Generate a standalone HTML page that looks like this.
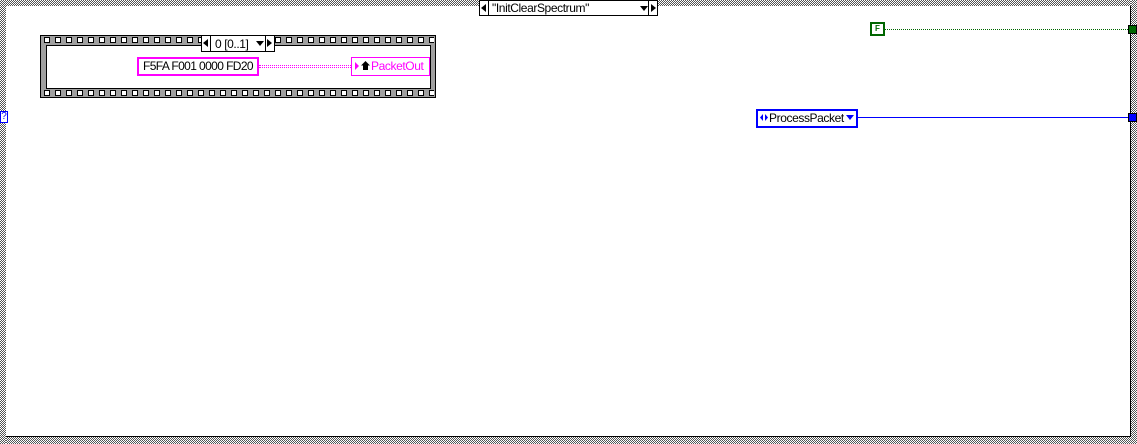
<!DOCTYPE html><html><head><style>
body{margin:0;width:1137px;height:444px;position:relative;overflow:hidden;background:#fff;font-family:"Liberation Sans",sans-serif}
.ck{position:absolute;background-color:#fff;background-image:repeating-conic-gradient(#555 0 25%,#fff 0 50%);background-size:2px 2px}
.a{position:absolute;box-sizing:border-box;white-space:nowrap}
.t{font-size:12px;letter-spacing:-0.4px}
</style></head><body>
<div class="ck" style="left:0;top:0;width:1137px;height:6px"></div>
<div class="ck" style="left:0;top:437px;width:1137px;height:7px"></div>
<div class="ck" style="left:0;top:0;width:6px;height:444px"></div>
<div class="ck" style="left:1131px;top:0;width:6px;height:444px"></div>
<div class="a" style="left:1130px;top:6px;width:1px;height:431px;background:#000"></div>
<div class="a" style="left:6px;top:436px;width:1125px;height:1px;background:#000"></div>
<!-- case selector -->
<div class="a" style="left:479px;top:0;width:179px;height:16px;background:#fff;border:1px solid #000"></div>
<div class="a" style="left:481px;top:4px;width:0;height:0;border:4px solid transparent;border-right:5px solid #000;border-left:none"></div>
<div class="a" style="left:488px;top:0;width:1px;height:16px;background:#000"></div>
<div class="a" style="left:648px;top:0;width:1px;height:16px;background:#000"></div>
<div class="a" style="left:651px;top:4px;width:0;height:0;border:4px solid transparent;border-left:5px solid #000;border-right:none"></div>
<div class="a" style="left:640px;top:6px;border:4px solid transparent;border-top:5px solid #000;border-bottom:none"></div>
<div class="a t" style="left:492px;top:1px;line-height:14px">"InitClearSpectrum"</div>
<!-- sequence frame -->
<svg class="a" style="left:40px;top:35px" width="396" height="63">
<defs><pattern id="p" x="4" y="0" width="11" height="63" patternUnits="userSpaceOnUse"><rect x="0.5" y="2.5" width="5" height="5" fill="#fff" stroke="#000"/><rect x="0.5" y="55.5" width="5" height="5" fill="#fff" stroke="#000"/></pattern></defs>
<rect x="0.5" y="0.5" width="395" height="62" fill="#a0a0a0" stroke="#000"/>
<rect x="2" y="0" width="392" height="63" fill="url(#p)"/>
<rect x="6.5" y="10.5" width="384" height="43" fill="#fff" stroke="#000"/>
</svg>
<div class="a" style="left:201px;top:35px;width:74px;height:17px;background:#fff;border:1px solid #000"></div>
<div class="a" style="left:203px;top:39px;border:4px solid transparent;border-right:5px solid #000;border-left:none"></div>
<div class="a" style="left:210px;top:35px;width:1px;height:17px;background:#000"></div>
<div class="a" style="left:265px;top:35px;width:1px;height:17px;background:#000"></div>
<div class="a" style="left:267px;top:39px;border:4px solid transparent;border-left:5px solid #000;border-right:none"></div>
<div class="a" style="left:256px;top:41px;border:4px solid transparent;border-top:5px solid #000;border-bottom:none"></div>
<div class="a t" style="left:215px;top:37px;line-height:14px">0 [0..1]</div>
<div class="a t" style="left:137px;top:57px;width:122px;height:19px;border:2px solid #f0f;line-height:15px;padding-left:4px;letter-spacing:-0.6px;background:#fff">F5FA F001 0000 FD20</div>
<div class="a" style="left:259px;top:65px;width:92px;height:3px;border-top:1px dotted #f0f;border-bottom:1px dotted #f0f"></div>
<div class="a" style="left:351px;top:57px;width:79px;height:19px;border:1px solid #f0f;background:#fff"></div>
<div class="a" style="left:355px;top:62px;border:4px solid transparent;border-left:4px solid #f0f;border-right:none"></div>
<svg class="a" style="left:361px;top:61px" width="9" height="9"><path d="M4.5 0L9 4.5H7V9H2V4.5H0Z" fill="#000"/></svg>
<div class="a t" style="left:371px;top:58px;line-height:16px;color:#f0f">PacketOut</div>
<!-- ? -->
<div class="a" style="left:0;top:111px;width:8px;height:12px;border:1px solid #00f;background:#fff;font-size:10px;line-height:10px;color:#00f;text-align:center">?</div>
<!-- F constant -->
<div class="a" style="left:870px;top:22px;width:15px;height:14px;border:2px solid #060;background:#fff;font-size:8px;font-weight:bold;color:#060;text-align:center;line-height:10px">F</div>
<div class="a" style="left:885px;top:29px;width:243px;height:0;border-top:1px dotted #060"></div>
<div class="a" style="left:1128px;top:25px;width:9px;height:9px;background:#060;border:1px solid #000"></div>
<!-- ProcessPacket -->
<div class="a" style="left:756px;top:109px;width:102px;height:19px;border:2px solid #00f;background:#fff"></div>
<svg class="a" style="left:760px;top:114px" width="8" height="7"><path d="M0 3.5L3 0V7Z M8 3.5L5 0V7Z" fill="#00f"/></svg>
<div class="a t" style="left:769px;top:110px;line-height:16px">ProcessPacket</div>
<div class="a" style="left:846px;top:115px;border:4px solid transparent;border-top:5px solid #00f;border-bottom:none"></div>
<div class="a" style="left:858px;top:117px;width:270px;height:1px;background:#00f"></div>
<div class="a" style="left:1128px;top:113px;width:9px;height:9px;background:#00f;border:1px solid #000"></div>
</body></html>
